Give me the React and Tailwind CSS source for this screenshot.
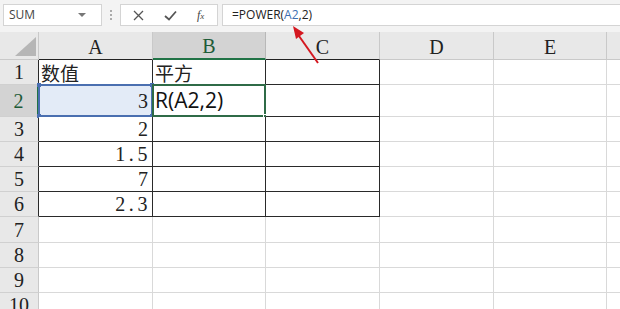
import React from 'react';

const serif = "font-['Liberation_Serif','Noto_Sans_CJK_SC',serif]";
const cjk = "font-['Noto_Sans_CJK_SC',sans-serif]";

const COLS = [
    { key: 'A', w: 'w-[114px]' },
    { key: 'B', w: 'w-[113px]' },
    { key: 'C', w: 'w-[114px]' },
    { key: 'D', w: 'w-[114px]' },
    { key: 'E', w: 'w-[113px]' },
    { key: 'F', w: 'w-[114px]', hidden: true },
];

const ROWS = [
    { n: 1, h: 'h-[25px]' },
    { n: 2, h: 'h-[32px]' },
    { n: 3, h: 'h-[25px]' },
    { n: 4, h: 'h-[25px]' },
    { n: 5, h: 'h-[25px]' },
    { n: 6, h: 'h-[25px]' },
    { n: 7, h: 'h-[26px]' },
    { n: 8, h: 'h-[25px]' },
    { n: 9, h: 'h-[25px]' },
    { n: 10, h: 'h-[25px]' },
];

const values = { 2: '3', 3: '2', 4: '1.5', 5: '7', 6: '2.3' };

const inTable = (r, c) => r <= 6 && ['A', 'B', 'C'].includes(c);

const Toolbar = () => (
    <div className="h-[32px] bg-[#f3f3f3] flex items-start pt-[4px] pl-[3px]">
        {/* name box */}
        <div className="w-[99px] h-[22px] bg-white border border-[#d4d4d4] flex items-center justify-between pl-[5px] pr-[15px]">
            <span className="font-['Open_Sans',sans-serif] text-[12px] text-[#444]">SUM</span>
            <span className="w-0 h-0 border-l-[4px] border-r-[4px] border-t-[4px] border-l-transparent border-r-transparent border-t-[#777]"></span>
        </div>
        <div className="w-[18px] h-[22px] flex flex-col items-center justify-center gap-[2px]">
            <span className="w-[2px] h-[2px] bg-[#aaa]"></span>
            <span className="w-[2px] h-[2px] bg-[#aaa]"></span>
            <span className="w-[2px] h-[2px] bg-[#aaa]"></span>
        </div>
        {/* cancel / enter / fx */}
        <div className="w-[98px] h-[22px] bg-white border border-[#d4d4d4] flex items-center pl-[12px] gap-[20px]">
            <svg width="11" height="11" viewBox="0 0 11 11"><path d="M1 1 L10 10 M10 1 L1 10" stroke="#555" strokeWidth="1.3" fill="none" /></svg>
            <svg width="13" height="11" viewBox="0 0 13 11"><path d="M1 6 L5 9.5 L12 1.5" stroke="#555" strokeWidth="1.8" fill="none" /></svg>
            <span className="font-['Liberation_Serif',serif] italic text-[12px] text-[#444] leading-none">f<span className="text-[9px]">x</span></span>
        </div>
        <div className="w-[4px]"></div>
        <div className="flex-1 h-[22px] bg-white border border-[#d4d4d4] border-r-0 flex items-center pl-[9px]">
            <span className="font-['Open_Sans',sans-serif] text-[12px] text-[#222]">=POWER(<span className="text-[#3d6fb0]">A2</span>,2)</span>
        </div>
    </div>
);

const HeaderRow = () => (
    <div className="flex h-[28px]">
        <div className="w-[39px] shrink-0 bg-[#e8e8e8] border-r border-b border-[#c9c9c9] flex items-end justify-end pr-[2px] pb-[3px]">
            <svg width="21" height="19" viewBox="0 0 21 19"><polygon points="0,19 21,0 21,19" fill="#b6b6b6" /></svg>
        </div>
        {COLS.map((c) => {
            const sel = c.key === 'B';
            const bottom = sel
                ? 'border-b-2 border-b-[#217346]'
                : inTable(1, c.key)
                ? 'border-b border-b-[#222]'
                : 'border-b border-b-[#c9c9c9]';
            return (
                <div
                    key={c.key}
                    className={`${c.w} shrink-0 flex items-center justify-center border-r ${bottom} ${sel ? 'bg-[#d3d3d3] text-[#1e5c38] border-r-[#b8b8b8]' : 'bg-[#e8e8e8] border-r-[#c9c9c9] text-[#222]'} ${serif} text-[20px] pt-[2px]`}
                >
                    {c.hidden ? '' : c.key}
                </div>
            );
        })}
    </div>
);

const Cell = ({ r, c }) => {
    const t = inTable(r, c.key);
    const borders = t ? 'border-r-[#2a2a2a] border-b-[#2a2a2a]' : 'border-r-[#d9d9d9] border-b-[#d9d9d9]';
    const fill = r === 2 && c.key === 'A' ? 'bg-[#e3ebf7]' : 'bg-white';

    let content = null;
    if (c.key === 'A' && r === 1) {
        content = <span className={`${cjk} text-[19px] text-[#222] pl-[2px] leading-none`}>数值</span>;
    } else if (c.key === 'B' && r === 1) {
        content = <span className={`${cjk} text-[19px] text-[#222] pl-[2px] leading-none`}>平方</span>;
    } else if (c.key === 'A' && values[r]) {
        content = (
            <span className={`ml-auto pr-[4px] ${serif} text-[20px] text-[#222] leading-none ${values[r].includes('.') ? 'tracking-[0.18em] -mr-[3px]' : ''}`}>
                {values[r]}
            </span>
        );
    } else if (c.key === 'B' && r === 2) {
        content = <span className="font-['Open_Sans',sans-serif] text-[21px] text-[#111] pl-[2px] leading-none">R(A2,2)</span>;
    }

    return (
        <div className={`${c.w} shrink-0 border-r border-b relative flex items-center ${borders} ${fill}`}>
            {content}
            {r === 2 && c.key === 'A' && (
                <div className="absolute -left-px -top-px -right-px -bottom-px border-2 border-[#4a6fb0] pointer-events-none">
                    <span className="absolute -left-[3px] -top-[3px] w-[4px] h-[4px] bg-[#4a6fb0]"></span>
                    <span className="absolute -right-[3px] -top-[3px] w-[4px] h-[4px] bg-[#4a6fb0]"></span>
                    <span className="absolute -left-[3px] -bottom-[3px] w-[4px] h-[4px] bg-[#4a6fb0]"></span>
                    <span className="absolute -right-[3px] -bottom-[3px] w-[4px] h-[4px] bg-[#4a6fb0]"></span>
                </div>
            )}
            {r === 2 && c.key === 'B' && (
                <div className="absolute -left-px -top-px -right-px -bottom-px border-2 border-[#2f6b47] pointer-events-none">
                    <span className="absolute -right-[4px] -bottom-[4px] w-[5px] h-[5px] bg-[#2f6b47] border border-white"></span>
                </div>
            )}
        </div>
    );
};

const Row = ({ row }) => {
    const sel = row.n === 2;
    const rowHeaderBorder = row.n <= 6 ? 'border-r-[#2a2a2a]' : 'border-r-[#c9c9c9]';
    return (
        <div className={`flex ${row.h}`}>
            <div
                className={`w-[39px] shrink-0 border-r border-b border-b-[#d0d0d0] ${rowHeaderBorder} ${sel ? 'bg-[#d3d3d3] text-[#1e5c38] border-r-2 border-r-[#217346]' : 'bg-[#e8e8e8] text-[#222]'} flex items-center justify-center ${serif} text-[20px] leading-none`}
            >
                {row.n}
            </div>
            {COLS.map((c) => (
                <Cell key={c.key} r={row.n} c={c} />
            ))}
        </div>
    );
};

const App = () => {
    return (
        <div className="w-[620px] h-[309px] overflow-hidden bg-white relative">
            <Toolbar />
            <HeaderRow />
            {ROWS.map((row) => (
                <Row key={row.n} row={row} />
            ))}
            {/* red annotation arrow */}
            <svg className="absolute left-0 top-0 pointer-events-none" width="620" height="309">
                <line x1="318" y1="63" x2="299" y2="36" stroke="#d41820" strokeWidth="2" />
                <polygon points="293,26 304,33 296,39" fill="#d41820" />
            </svg>
        </div>
    );
};

export default App;
